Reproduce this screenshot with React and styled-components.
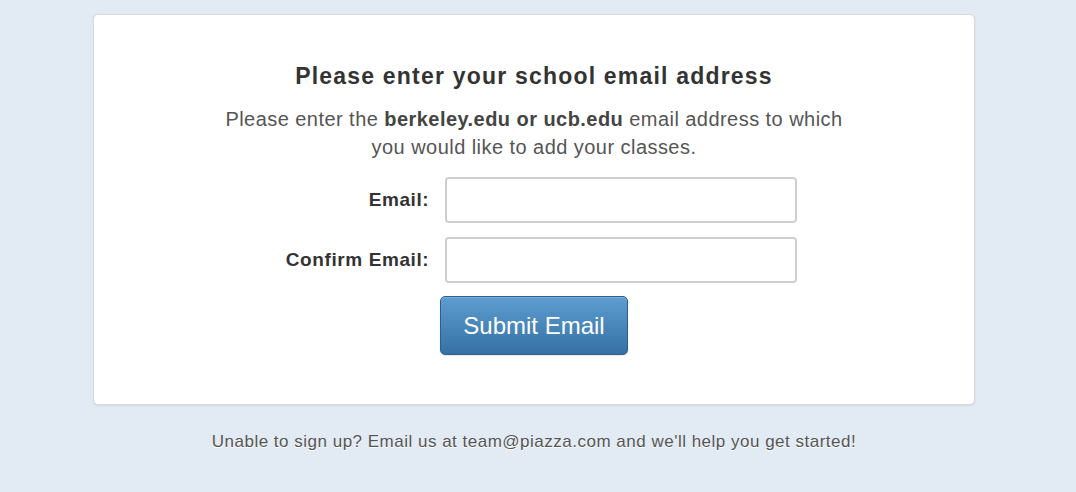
import React from 'react';
import styled, { createGlobalStyle } from 'styled-components';

const GlobalStyle = createGlobalStyle`
  html, body {
    margin: 0;
    padding: 0;
    background: #e2ebf4;
    font-family: "Liberation Sans", Arial, sans-serif;
  }
`;

const Page = styled.div`
  min-height: 492px;
  padding: 14px 101px 0 93px;
  box-sizing: border-box;
`;

const Column = styled.div`
  width: 882px;
`;

const Card = styled.div`
  background: #fff;
  border: 1px solid #d9d9d9;
  border-radius: 5px;
  box-shadow: 0 1px 2px rgba(0, 0, 0, 0.08);
  padding: 47px 0 49px;
  display: flex;
  flex-direction: column;
  align-items: center;
`;

const Title = styled.h2`
  margin: 0;
  font-size: 23px;
  line-height: 28px;
  letter-spacing: 1.2px;
  font-weight: bold;
  color: #333;
`;

const Intro = styled.p`
  margin: 15px 0 0;
  width: 624px;
  text-align: center;
  font-size: 20px;
  line-height: 28px;
  letter-spacing: 0.45px;
  color: #555;

  b {
    color: #444;
  }
`;

const Form = styled.form`
  margin-top: 16px;
  display: flex;
  flex-direction: column;
  align-items: center;
`;

const Fields = styled.div`
  display: grid;
  grid-template-columns: auto 352px;
  column-gap: 16px;
  row-gap: 14px;
  align-items: center;
  margin-left: 15px;
`;

const Label = styled.label`
  text-align: right;
  font-size: 19px;
  letter-spacing: 0.6px;
  font-weight: bold;
  color: #333;
`;

const Input = styled.input`
  box-sizing: border-box;
  height: 46px;
  width: 352px;
  margin: 0;
  border: 2px solid #cfcfcf;
  border-radius: 4px;
  font-size: 18px;
  padding: 0 10px;
  outline: none;
  background: #fff;
`;

const Button = styled.button`
  margin-top: 13px;
  width: 188px;
  height: 59px;
  border: 1px solid #2b5f8e;
  border-radius: 5px;
  background: linear-gradient(to bottom, #5d9dd0, #3571a5);
  color: #fff;
  font-family: "Liberation Sans", Arial, sans-serif;
  font-size: 24px;
  box-shadow: inset 0 1px 0 rgba(255, 255, 255, 0.2), 0 1px 2px rgba(0, 0, 0, 0.1);
  cursor: pointer;
`;

const Footer = styled.p`
  margin: 27px 0 0;
  text-align: center;
  font-size: 17px;
  letter-spacing: 0.5px;
  color: #555;
  text-shadow: 0 1px 0 #fff;
`;

export default function App() {
  return (
    <>
      <GlobalStyle />
      <Page>
        <Column>
          <Card>
            <Title>Please enter your school email address</Title>
            <Intro>
              Please enter the <b>berkeley.edu or ucb.edu</b> email address to which you would like to add your classes.
            </Intro>
            <Form onSubmit={e => e.preventDefault()}>
              <Fields>
                <Label htmlFor="email">Email:</Label>
                <Input id="email" type="email" />
                <Label htmlFor="confirm">Confirm Email:</Label>
                <Input id="confirm" type="email" />
              </Fields>
              <Button type="submit">Submit Email</Button>
            </Form>
          </Card>
          <Footer>Unable to sign up? Email us at team@piazza.com and we'll help you get started!</Footer>
        </Column>
      </Page>
    </>
  );
}
